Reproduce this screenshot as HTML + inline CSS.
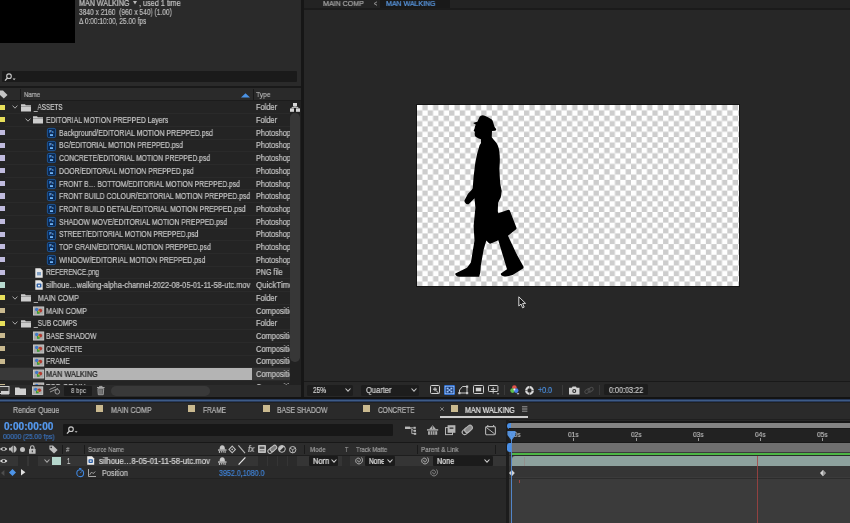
<!DOCTYPE html>
<html><head><meta charset="utf-8"><title>After Effects - MAN WALKING</title>
<style>
html,body{margin:0;padding:0;background:#232323;}
body{width:850px;height:523px;position:relative;overflow:hidden;font-family:"Liberation Sans",sans-serif;font-size:8.6px;color:#c2c2c2;line-height:12.7px;}
div,svg{position:absolute;}
.ic{overflow:visible}
#proj{left:0;top:0;width:301.5px;height:398px;background:#2a2a2a;overflow:hidden}
.lab{left:0;width:4.7px;height:5.2px}
.nm{white-space:nowrap;height:12.7px;color:#c4c4c4}
.nm.sel{color:#1a1a1a}
.ty{left:256px;width:35px;overflow:hidden;white-space:nowrap;height:12.7px;color:#c4c4c4}
.selrow{left:0;width:291px;height:11.6px;background:#393939}
.selrow:after{content:"";position:absolute;left:44.5px;top:0;width:207px;height:100%;background:#b4b4b4}
.t{white-space:pre;will-change:transform;-webkit-text-stroke:0.22px currentColor}
</style></head><body>
<!-- ===== PROJECT PANEL ===== -->
<div id="proj">
  <div style="left:0;top:0;width:75px;height:43px;background:#000"></div>
  <div class="t" style="left:78.80px;top:-3.10px;font-size:8.6px;line-height:12.0px;color:#c8c8c8;transform:scaleX(0.8300);transform-origin:0 0;">MAN WALKING</div>
  <svg class="ic" style="left:132.6px;top:1.2px" width="4" height="3.4" viewBox="0 0 4 3.4"><path d="M0 0H4L2 3.4z" fill="#b8b8b8"/></svg>
  <div class="t" style="left:139.20px;top:-3.10px;font-size:8.6px;line-height:12.0px;color:#c2c2c2;transform:scaleX(0.8449);transform-origin:0 0;">, used 1 time</div>
  <div class="t" style="left:78.80px;top:6.20px;font-size:8.6px;line-height:12.0px;color:#bdbdbd;transform:scaleX(0.7711);transform-origin:0 0;">3840 x 2160  (960 x 540) (1.00)</div>
  <div class="t" style="left:78.80px;top:14.80px;font-size:8.6px;line-height:12.0px;color:#bdbdbd;transform:scaleX(0.7618);transform-origin:0 0;">Δ 0:00:10:00, 25.00 fps</div>
  <div style="left:0;top:100.6px;width:301.5px;height:284px;background:#242424"></div>
  <!-- search -->
  <div style="left:1.5px;top:71px;width:295px;height:10.8px;background:#1a1a1a;border-radius:1px"></div>
  <svg class="ic" style="left:4px;top:72.5px" width="12" height="9" viewBox="0 0 12 9"><circle cx="5" cy="3.2" r="2.3" fill="none" stroke="#c9c9c9" stroke-width="1.1"/><path d="M3.4 5L1 7.6" stroke="#c9c9c9" stroke-width="1.3"/><path d="M8.6 5.6h3l-1.5 1.6z" fill="#c9c9c9"/></svg>
  <!-- header -->
  <div style="left:0;top:86.4px;width:301.5px;height:1.8px;background:#191919"></div><div style="left:0;top:100px;width:301.5px;height:1px;background:#1c1c1c"></div>
  <div style="left:252.5px;top:89px;width:1px;height:11px;background:#181818"></div>
  <div style="left:19.6px;top:89px;width:1px;height:11px;background:#1a1a1a"></div>
  <svg class="ic" style="left:0;top:90px" width="8" height="9" viewBox="0 0 8 9"><path d="M-1 0.5H3L7.5 5L3.8 8.6L-1 4z" fill="#c6c6c6"/></svg>
  <div class="t" style="left:24.00px;top:89.30px;font-size:8.0px;line-height:12.0px;color:#b2b2b2;transform:scaleX(0.7497);transform-origin:0 0;">Name</div>
  <div class="t" style="left:256.00px;top:89.30px;font-size:8.0px;line-height:12.0px;color:#b2b2b2;transform:scaleX(0.8360);transform-origin:0 0;">Type</div>
  <svg class="ic" style="left:241px;top:92.5px" width="9" height="5" viewBox="0 0 9 5"><path d="M0 4.6L4.5 0.3L9 4.6z" fill="#4b93e6"/></svg>
<div style="left:5px;top:113.20px;width:285px;height:0.8px;background:#2a2a2a"></div>
<div class="lab" style="top:104.50px;background:#e6de5a"></div>
<svg class="ic" style="left:12.2px;top:105.30px" width="6" height="4" viewBox="0 0 6 4"><path d="M0.6 0.6L3 3.2L5.4 0.6" fill="none" stroke="#a8a8a8" stroke-width="1"/></svg>
<svg class="ic" style="left:21px;top:103.50px" width="10" height="7.6" viewBox="0 0 10 7.6"><path d="M0 0.3h4l0.8 1H10V7.6H0z" fill="#cdcdcd"/><path d="M0 2.5H10" stroke="#8a8a8a" stroke-width="0.7"/></svg>
<div class="t" style="left:33.50px;top:101.25px;font-size:8.6px;line-height:12.0px;color:#c4c4c4;transform:scaleX(0.7361);transform-origin:0 0;">_ASSETS</div>
<div style="left:5px;top:125.91px;width:285px;height:0.8px;background:#2a2a2a"></div>
<div class="lab" style="top:117.21px;background:#e6de5a"></div>
<svg class="ic" style="left:24.6px;top:118.01px" width="6" height="4" viewBox="0 0 6 4"><path d="M0.6 0.6L3 3.2L5.4 0.6" fill="none" stroke="#a8a8a8" stroke-width="1"/></svg>
<svg class="ic" style="left:33.4px;top:116.21px" width="10" height="7.6" viewBox="0 0 10 7.6"><path d="M0 0.3h4l0.8 1H10V7.6H0z" fill="#cdcdcd"/><path d="M0 2.5H10" stroke="#8a8a8a" stroke-width="0.7"/></svg>
<div class="t" style="left:45.50px;top:113.96px;font-size:8.6px;line-height:12.0px;color:#c4c4c4;transform:scaleX(0.7972);transform-origin:0 0;">EDITORIAL MOTION PREPPED Layers</div>
<div style="left:5px;top:138.62px;width:285px;height:0.8px;background:#2a2a2a"></div>
<div class="lab" style="top:129.92px;background:#c0bbde"></div>
<svg class="ic" style="left:46.7px;top:127.92px" width="9" height="10" viewBox="0 0 9 10"><rect x="0.4" y="0.4" width="8.2" height="9.2" rx="1.4" fill="#0a2a55" stroke="#1f5594" stroke-width="1"/><text x="4.5" y="5" font-size="3.6" font-weight="bold" fill="#6fb2f4" text-anchor="middle" font-family="Liberation Sans, sans-serif">Ps</text><rect x="3" y="6.2" width="3" height="1.8" fill="#6fb2f4"/></svg>
<div class="t" style="left:58.50px;top:126.67px;font-size:8.6px;line-height:12.0px;color:#c4c4c4;transform:scaleX(0.8121);transform-origin:0 0;">Background/EDITORIAL MOTION PREPPED.psd</div>
<div style="left:5px;top:151.33px;width:285px;height:0.8px;background:#2a2a2a"></div>
<div class="lab" style="top:142.63px;background:#c0bbde"></div>
<svg class="ic" style="left:46.7px;top:140.63px" width="9" height="10" viewBox="0 0 9 10"><rect x="0.4" y="0.4" width="8.2" height="9.2" rx="1.4" fill="#0a2a55" stroke="#1f5594" stroke-width="1"/><text x="4.5" y="5" font-size="3.6" font-weight="bold" fill="#6fb2f4" text-anchor="middle" font-family="Liberation Sans, sans-serif">Ps</text><rect x="3" y="6.2" width="3" height="1.8" fill="#6fb2f4"/></svg>
<div class="t" style="left:58.50px;top:139.38px;font-size:8.6px;line-height:12.0px;color:#c4c4c4;transform:scaleX(0.7928);transform-origin:0 0;">BG/EDITORIAL MOTION PREPPED.psd</div>
<div style="left:5px;top:164.04px;width:285px;height:0.8px;background:#2a2a2a"></div>
<div class="lab" style="top:155.34px;background:#c0bbde"></div>
<svg class="ic" style="left:46.7px;top:153.34px" width="9" height="10" viewBox="0 0 9 10"><rect x="0.4" y="0.4" width="8.2" height="9.2" rx="1.4" fill="#0a2a55" stroke="#1f5594" stroke-width="1"/><text x="4.5" y="5" font-size="3.6" font-weight="bold" fill="#6fb2f4" text-anchor="middle" font-family="Liberation Sans, sans-serif">Ps</text><rect x="3" y="6.2" width="3" height="1.8" fill="#6fb2f4"/></svg>
<div class="t" style="left:58.50px;top:152.09px;font-size:8.6px;line-height:12.0px;color:#c4c4c4;transform:scaleX(0.7871);transform-origin:0 0;">CONCRETE/EDITORIAL MOTION PREPPED.psd</div>
<div style="left:5px;top:176.75px;width:285px;height:0.8px;background:#2a2a2a"></div>
<div class="lab" style="top:168.05px;background:#c0bbde"></div>
<svg class="ic" style="left:46.7px;top:166.05px" width="9" height="10" viewBox="0 0 9 10"><rect x="0.4" y="0.4" width="8.2" height="9.2" rx="1.4" fill="#0a2a55" stroke="#1f5594" stroke-width="1"/><text x="4.5" y="5" font-size="3.6" font-weight="bold" fill="#6fb2f4" text-anchor="middle" font-family="Liberation Sans, sans-serif">Ps</text><rect x="3" y="6.2" width="3" height="1.8" fill="#6fb2f4"/></svg>
<div class="t" style="left:58.50px;top:164.80px;font-size:8.6px;line-height:12.0px;color:#c4c4c4;transform:scaleX(0.7946);transform-origin:0 0;">DOOR/EDITORIAL MOTION PREPPED.psd</div>
<div style="left:5px;top:189.46px;width:285px;height:0.8px;background:#2a2a2a"></div>
<div class="lab" style="top:180.76px;background:#c0bbde"></div>
<svg class="ic" style="left:46.7px;top:178.76px" width="9" height="10" viewBox="0 0 9 10"><rect x="0.4" y="0.4" width="8.2" height="9.2" rx="1.4" fill="#0a2a55" stroke="#1f5594" stroke-width="1"/><text x="4.5" y="5" font-size="3.6" font-weight="bold" fill="#6fb2f4" text-anchor="middle" font-family="Liberation Sans, sans-serif">Ps</text><rect x="3" y="6.2" width="3" height="1.8" fill="#6fb2f4"/></svg>
<div class="t" style="left:58.50px;top:177.51px;font-size:8.6px;line-height:12.0px;color:#c4c4c4;transform:scaleX(0.7906);transform-origin:0 0;">FRONT B… BOTTOM/EDITORIAL MOTION PREPPED.psd</div>
<div style="left:5px;top:202.17px;width:285px;height:0.8px;background:#2a2a2a"></div>
<div class="lab" style="top:193.47px;background:#c0bbde"></div>
<svg class="ic" style="left:46.7px;top:191.47px" width="9" height="10" viewBox="0 0 9 10"><rect x="0.4" y="0.4" width="8.2" height="9.2" rx="1.4" fill="#0a2a55" stroke="#1f5594" stroke-width="1"/><text x="4.5" y="5" font-size="3.6" font-weight="bold" fill="#6fb2f4" text-anchor="middle" font-family="Liberation Sans, sans-serif">Ps</text><rect x="3" y="6.2" width="3" height="1.8" fill="#6fb2f4"/></svg>
<div class="t" style="left:58.50px;top:190.22px;font-size:8.6px;line-height:12.0px;color:#c4c4c4;transform:scaleX(0.7964);transform-origin:0 0;">FRONT BUILD COLOUR/EDITORIAL MOTION PREPPED.psd</div>
<div style="left:5px;top:214.88px;width:285px;height:0.8px;background:#2a2a2a"></div>
<div class="lab" style="top:206.18px;background:#c0bbde"></div>
<svg class="ic" style="left:46.7px;top:204.18px" width="9" height="10" viewBox="0 0 9 10"><rect x="0.4" y="0.4" width="8.2" height="9.2" rx="1.4" fill="#0a2a55" stroke="#1f5594" stroke-width="1"/><text x="4.5" y="5" font-size="3.6" font-weight="bold" fill="#6fb2f4" text-anchor="middle" font-family="Liberation Sans, sans-serif">Ps</text><rect x="3" y="6.2" width="3" height="1.8" fill="#6fb2f4"/></svg>
<div class="t" style="left:58.50px;top:202.93px;font-size:8.6px;line-height:12.0px;color:#c4c4c4;transform:scaleX(0.8012);transform-origin:0 0;">FRONT BUILD DETAIL/EDITORIAL MOTION PREPPED.psd</div>
<div style="left:5px;top:227.59px;width:285px;height:0.8px;background:#2a2a2a"></div>
<div class="lab" style="top:218.89px;background:#c0bbde"></div>
<svg class="ic" style="left:46.7px;top:216.89px" width="9" height="10" viewBox="0 0 9 10"><rect x="0.4" y="0.4" width="8.2" height="9.2" rx="1.4" fill="#0a2a55" stroke="#1f5594" stroke-width="1"/><text x="4.5" y="5" font-size="3.6" font-weight="bold" fill="#6fb2f4" text-anchor="middle" font-family="Liberation Sans, sans-serif">Ps</text><rect x="3" y="6.2" width="3" height="1.8" fill="#6fb2f4"/></svg>
<div class="t" style="left:58.50px;top:215.64px;font-size:8.6px;line-height:12.0px;color:#c4c4c4;transform:scaleX(0.8004);transform-origin:0 0;">SHADOW MOVE/EDITORIAL MOTION PREPPED.psd</div>
<div style="left:5px;top:240.30px;width:285px;height:0.8px;background:#2a2a2a"></div>
<div class="lab" style="top:231.60px;background:#c0bbde"></div>
<svg class="ic" style="left:46.7px;top:229.60px" width="9" height="10" viewBox="0 0 9 10"><rect x="0.4" y="0.4" width="8.2" height="9.2" rx="1.4" fill="#0a2a55" stroke="#1f5594" stroke-width="1"/><text x="4.5" y="5" font-size="3.6" font-weight="bold" fill="#6fb2f4" text-anchor="middle" font-family="Liberation Sans, sans-serif">Ps</text><rect x="3" y="6.2" width="3" height="1.8" fill="#6fb2f4"/></svg>
<div class="t" style="left:58.50px;top:228.35px;font-size:8.6px;line-height:12.0px;color:#c4c4c4;transform:scaleX(0.7847);transform-origin:0 0;">STREET/EDITORIAL MOTION PREPPED.psd</div>
<div style="left:5px;top:253.01px;width:285px;height:0.8px;background:#2a2a2a"></div>
<div class="lab" style="top:244.31px;background:#c0bbde"></div>
<svg class="ic" style="left:46.7px;top:242.31px" width="9" height="10" viewBox="0 0 9 10"><rect x="0.4" y="0.4" width="8.2" height="9.2" rx="1.4" fill="#0a2a55" stroke="#1f5594" stroke-width="1"/><text x="4.5" y="5" font-size="3.6" font-weight="bold" fill="#6fb2f4" text-anchor="middle" font-family="Liberation Sans, sans-serif">Ps</text><rect x="3" y="6.2" width="3" height="1.8" fill="#6fb2f4"/></svg>
<div class="t" style="left:58.50px;top:241.06px;font-size:8.6px;line-height:12.0px;color:#c4c4c4;transform:scaleX(0.7959);transform-origin:0 0;">TOP GRAIN/EDITORIAL MOTION PREPPED.psd</div>
<div style="left:5px;top:265.72px;width:285px;height:0.8px;background:#2a2a2a"></div>
<div class="lab" style="top:257.02px;background:#c0bbde"></div>
<svg class="ic" style="left:46.7px;top:255.02px" width="9" height="10" viewBox="0 0 9 10"><rect x="0.4" y="0.4" width="8.2" height="9.2" rx="1.4" fill="#0a2a55" stroke="#1f5594" stroke-width="1"/><text x="4.5" y="5" font-size="3.6" font-weight="bold" fill="#6fb2f4" text-anchor="middle" font-family="Liberation Sans, sans-serif">Ps</text><rect x="3" y="6.2" width="3" height="1.8" fill="#6fb2f4"/></svg>
<div class="t" style="left:58.50px;top:253.77px;font-size:8.6px;line-height:12.0px;color:#c4c4c4;transform:scaleX(0.8068);transform-origin:0 0;">WINDOW/EDITORIAL MOTION PREPPED.psd</div>
<div style="left:5px;top:278.43px;width:285px;height:0.8px;background:#2a2a2a"></div>
<div class="lab" style="top:269.73px;background:#c0bbde"></div>
<svg class="ic" style="left:35px;top:267.73px" width="8" height="10" viewBox="0 0 8 10"><path d="M0.3 0.3H5.5L7.7 2.6V9.7H0.3z" fill="#e6e6e6"/><rect x="2" y="4" width="4" height="3.4" fill="#7f9fc4"/></svg>
<div class="t" style="left:45.50px;top:266.48px;font-size:8.6px;line-height:12.0px;color:#c4c4c4;transform:scaleX(0.7595);transform-origin:0 0;">REFERENCE.png</div>
<div style="left:5px;top:291.14px;width:285px;height:0.8px;background:#2a2a2a"></div>
<div class="lab" style="top:282.44px;background:#b8dad0"></div>
<svg class="ic" style="left:35px;top:280.44px" width="8" height="10" viewBox="0 0 8 10"><path d="M0.3 0.3H5.5L7.7 2.6V9.7H0.3z" fill="#e6e6e6"/><rect x="1.6" y="3.6" width="4.8" height="4" rx="0.8" fill="#2a5fa8"/><rect x="3" y="4.8" width="2" height="1.6" fill="#e6e6e6"/></svg>
<div class="t" style="left:45.50px;top:279.19px;font-size:8.6px;line-height:12.0px;color:#c4c4c4;transform:scaleX(0.8587);transform-origin:0 0;">silhoue…walking-alpha-channel-2022-08-05-01-11-58-utc.mov</div>
<div style="left:5px;top:303.85px;width:285px;height:0.8px;background:#2a2a2a"></div>
<div class="lab" style="top:295.15px;background:#e6de5a"></div>
<svg class="ic" style="left:12.2px;top:295.95px" width="6" height="4" viewBox="0 0 6 4"><path d="M0.6 0.6L3 3.2L5.4 0.6" fill="none" stroke="#a8a8a8" stroke-width="1"/></svg>
<svg class="ic" style="left:21px;top:294.15px" width="10" height="7.6" viewBox="0 0 10 7.6"><path d="M0 0.3h4l0.8 1H10V7.6H0z" fill="#cdcdcd"/><path d="M0 2.5H10" stroke="#8a8a8a" stroke-width="0.7"/></svg>
<div class="t" style="left:33.50px;top:291.90px;font-size:8.6px;line-height:12.0px;color:#c4c4c4;transform:scaleX(0.8243);transform-origin:0 0;">_MAIN COMP</div>
<div style="left:5px;top:316.56px;width:285px;height:0.8px;background:#2a2a2a"></div>
<div class="lab" style="top:307.86px;background:#c9b98f"></div>
<svg class="ic" style="left:32.8px;top:305.76px" width="11.2" height="10" viewBox="0 0 11.2 10"><rect x="0" y="0" width="11.2" height="10" fill="#141414"/><rect x="0.4" y="0.9" width="10.4" height="8.2" fill="#a9a9a9" stroke="#d6d6d6" stroke-width="0.8"/><circle cx="3.7" cy="3.5" r="1.7" fill="#3f78c8"/><circle cx="7.3" cy="4.6" r="1.9" fill="#b23a30"/><rect x="4" y="5" width="2.6" height="2.8" fill="#3a9a3a"/><rect x="5.2" y="4.6" width="1.4" height="1.6" fill="#d0b030"/></svg>
<div class="t" style="left:45.50px;top:304.61px;font-size:8.6px;line-height:12.0px;color:#c4c4c4;transform:scaleX(0.8231);transform-origin:0 0;">MAIN COMP</div>
<div style="left:5px;top:329.27px;width:285px;height:0.8px;background:#2a2a2a"></div>
<div class="lab" style="top:320.57px;background:#e6de5a"></div>
<svg class="ic" style="left:12.2px;top:321.37px" width="6" height="4" viewBox="0 0 6 4"><path d="M0.6 0.6L3 3.2L5.4 0.6" fill="none" stroke="#a8a8a8" stroke-width="1"/></svg>
<svg class="ic" style="left:21px;top:319.57px" width="10" height="7.6" viewBox="0 0 10 7.6"><path d="M0 0.3h4l0.8 1H10V7.6H0z" fill="#cdcdcd"/><path d="M0 2.5H10" stroke="#8a8a8a" stroke-width="0.7"/></svg>
<div class="t" style="left:33.50px;top:317.32px;font-size:8.6px;line-height:12.0px;color:#c4c4c4;transform:scaleX(0.7643);transform-origin:0 0;">_SUB COMPS</div>
<div style="left:5px;top:341.98px;width:285px;height:0.8px;background:#2a2a2a"></div>
<div class="lab" style="top:333.28px;background:#c9b98f"></div>
<svg class="ic" style="left:32.8px;top:331.18px" width="11.2" height="10" viewBox="0 0 11.2 10"><rect x="0" y="0" width="11.2" height="10" fill="#141414"/><rect x="0.4" y="0.9" width="10.4" height="8.2" fill="#a9a9a9" stroke="#d6d6d6" stroke-width="0.8"/><circle cx="3.7" cy="3.5" r="1.7" fill="#3f78c8"/><circle cx="7.3" cy="4.6" r="1.9" fill="#b23a30"/><rect x="4" y="5" width="2.6" height="2.8" fill="#3a9a3a"/><rect x="5.2" y="4.6" width="1.4" height="1.6" fill="#d0b030"/></svg>
<div class="t" style="left:45.50px;top:330.03px;font-size:8.6px;line-height:12.0px;color:#c4c4c4;transform:scaleX(0.7871);transform-origin:0 0;">BASE SHADOW</div>
<div style="left:5px;top:354.69px;width:285px;height:0.8px;background:#2a2a2a"></div>
<div class="lab" style="top:345.99px;background:#c9b98f"></div>
<svg class="ic" style="left:32.8px;top:343.89px" width="11.2" height="10" viewBox="0 0 11.2 10"><rect x="0" y="0" width="11.2" height="10" fill="#141414"/><rect x="0.4" y="0.9" width="10.4" height="8.2" fill="#a9a9a9" stroke="#d6d6d6" stroke-width="0.8"/><circle cx="3.7" cy="3.5" r="1.7" fill="#3f78c8"/><circle cx="7.3" cy="4.6" r="1.9" fill="#b23a30"/><rect x="4" y="5" width="2.6" height="2.8" fill="#3a9a3a"/><rect x="5.2" y="4.6" width="1.4" height="1.6" fill="#d0b030"/></svg>
<div class="t" style="left:45.50px;top:342.74px;font-size:8.6px;line-height:12.0px;color:#c4c4c4;transform:scaleX(0.7501);transform-origin:0 0;">CONCRETE</div>
<div style="left:5px;top:367.40px;width:285px;height:0.8px;background:#2a2a2a"></div>
<div class="lab" style="top:358.70px;background:#c9b98f"></div>
<svg class="ic" style="left:32.8px;top:356.60px" width="11.2" height="10" viewBox="0 0 11.2 10"><rect x="0" y="0" width="11.2" height="10" fill="#141414"/><rect x="0.4" y="0.9" width="10.4" height="8.2" fill="#a9a9a9" stroke="#d6d6d6" stroke-width="0.8"/><circle cx="3.7" cy="3.5" r="1.7" fill="#3f78c8"/><circle cx="7.3" cy="4.6" r="1.9" fill="#b23a30"/><rect x="4" y="5" width="2.6" height="2.8" fill="#3a9a3a"/><rect x="5.2" y="4.6" width="1.4" height="1.6" fill="#d0b030"/></svg>
<div class="t" style="left:45.50px;top:355.45px;font-size:8.6px;line-height:12.0px;color:#c4c4c4;transform:scaleX(0.7907);transform-origin:0 0;">FRAME</div>
<div style="left:5px;top:380.11px;width:285px;height:0.8px;background:#2a2a2a"></div>
<div class="lab" style="top:371.41px;background:#c9b98f"></div>
<div class="selrow" style="top:368.11px"></div>
<svg class="ic" style="left:32.8px;top:369.31px" width="11.2" height="10" viewBox="0 0 11.2 10"><rect x="0" y="0" width="11.2" height="10" fill="#141414"/><rect x="0.4" y="0.9" width="10.4" height="8.2" fill="#a9a9a9" stroke="#d6d6d6" stroke-width="0.8"/><circle cx="3.7" cy="3.5" r="1.7" fill="#3f78c8"/><circle cx="7.3" cy="4.6" r="1.9" fill="#b23a30"/><rect x="4" y="5" width="2.6" height="2.8" fill="#3a9a3a"/><rect x="5.2" y="4.6" width="1.4" height="1.6" fill="#d0b030"/></svg>
<div class="t" style="left:45.50px;top:368.16px;font-size:8.6px;line-height:12.0px;color:#1a1a1a;transform:scaleX(0.8530);transform-origin:0 0;">MAN WALKING</div>
<div style="left:5px;top:392.82px;width:285px;height:0.8px;background:#2a2a2a"></div>
<div class="lab" style="top:384.12px;background:#c9b98f"></div>
<svg class="ic" style="left:32.8px;top:382.02px" width="11.2" height="10" viewBox="0 0 11.2 10"><rect x="0" y="0" width="11.2" height="10" fill="#141414"/><rect x="0.4" y="0.9" width="10.4" height="8.2" fill="#a9a9a9" stroke="#d6d6d6" stroke-width="0.8"/><circle cx="3.7" cy="3.5" r="1.7" fill="#3f78c8"/><circle cx="7.3" cy="4.6" r="1.9" fill="#b23a30"/><rect x="4" y="5" width="2.6" height="2.8" fill="#3a9a3a"/><rect x="5.2" y="4.6" width="1.4" height="1.6" fill="#d0b030"/></svg>
<div class="t" style="left:45.50px;top:380.87px;font-size:8.6px;line-height:12.0px;color:#c4c4c4;transform:scaleX(0.8405);transform-origin:0 0;">TOP GRAIN</div>
<div style="left:253px;top:0;width:36.9px;height:385px;overflow:hidden"><div class="t" style="left:3.30px;top:101.25px;font-size:8.6px;line-height:12.0px;color:#c4c4c4;transform:scaleX(0.8614);transform-origin:0 0;">Folder</div><div class="t" style="left:3.30px;top:113.96px;font-size:8.6px;line-height:12.0px;color:#c4c4c4;transform:scaleX(0.8614);transform-origin:0 0;">Folder</div><div class="t" style="left:3.30px;top:126.67px;font-size:8.6px;line-height:12.0px;color:#c4c4c4;transform:scaleX(0.8487);transform-origin:0 0;">Photoshop</div><div class="t" style="left:3.30px;top:139.38px;font-size:8.6px;line-height:12.0px;color:#c4c4c4;transform:scaleX(0.8487);transform-origin:0 0;">Photoshop</div><div class="t" style="left:3.30px;top:152.09px;font-size:8.6px;line-height:12.0px;color:#c4c4c4;transform:scaleX(0.8487);transform-origin:0 0;">Photoshop</div><div class="t" style="left:3.30px;top:164.80px;font-size:8.6px;line-height:12.0px;color:#c4c4c4;transform:scaleX(0.8487);transform-origin:0 0;">Photoshop</div><div class="t" style="left:3.30px;top:177.51px;font-size:8.6px;line-height:12.0px;color:#c4c4c4;transform:scaleX(0.8487);transform-origin:0 0;">Photoshop</div><div class="t" style="left:3.30px;top:190.22px;font-size:8.6px;line-height:12.0px;color:#c4c4c4;transform:scaleX(0.8487);transform-origin:0 0;">Photoshop</div><div class="t" style="left:3.30px;top:202.93px;font-size:8.6px;line-height:12.0px;color:#c4c4c4;transform:scaleX(0.8487);transform-origin:0 0;">Photoshop</div><div class="t" style="left:3.30px;top:215.64px;font-size:8.6px;line-height:12.0px;color:#c4c4c4;transform:scaleX(0.8487);transform-origin:0 0;">Photoshop</div><div class="t" style="left:3.30px;top:228.35px;font-size:8.6px;line-height:12.0px;color:#c4c4c4;transform:scaleX(0.8487);transform-origin:0 0;">Photoshop</div><div class="t" style="left:3.30px;top:241.06px;font-size:8.6px;line-height:12.0px;color:#c4c4c4;transform:scaleX(0.8487);transform-origin:0 0;">Photoshop</div><div class="t" style="left:3.30px;top:253.77px;font-size:8.6px;line-height:12.0px;color:#c4c4c4;transform:scaleX(0.8487);transform-origin:0 0;">Photoshop</div><div class="t" style="left:3.30px;top:266.48px;font-size:8.6px;line-height:12.0px;color:#c4c4c4;transform:scaleX(0.8276);transform-origin:0 0;">PNG file</div><div class="t" style="left:3.30px;top:279.19px;font-size:8.6px;line-height:12.0px;color:#c4c4c4;transform:scaleX(0.9246);transform-origin:0 0;">QuickTime</div><div class="t" style="left:3.30px;top:291.90px;font-size:8.6px;line-height:12.0px;color:#c4c4c4;transform:scaleX(0.8614);transform-origin:0 0;">Folder</div><div class="t" style="left:3.30px;top:304.61px;font-size:8.6px;line-height:12.0px;color:#c4c4c4;transform:scaleX(0.8640);transform-origin:0 0;">Composition</div><div class="t" style="left:3.30px;top:317.32px;font-size:8.6px;line-height:12.0px;color:#c4c4c4;transform:scaleX(0.8614);transform-origin:0 0;">Folder</div><div class="t" style="left:3.30px;top:330.03px;font-size:8.6px;line-height:12.0px;color:#c4c4c4;transform:scaleX(0.8640);transform-origin:0 0;">Composition</div><div class="t" style="left:3.30px;top:342.74px;font-size:8.6px;line-height:12.0px;color:#c4c4c4;transform:scaleX(0.8640);transform-origin:0 0;">Composition</div><div class="t" style="left:3.30px;top:355.45px;font-size:8.6px;line-height:12.0px;color:#c4c4c4;transform:scaleX(0.8640);transform-origin:0 0;">Composition</div><div class="t" style="left:3.30px;top:368.16px;font-size:8.6px;line-height:12.0px;color:#c4c4c4;transform:scaleX(0.8640);transform-origin:0 0;">Composition</div><div class="t" style="left:3.30px;top:380.87px;font-size:8.6px;line-height:12.0px;color:#c4c4c4;transform:scaleX(0.8640);transform-origin:0 0;">Composition</div></div>
  <!-- scrollbar -->
  <div style="left:289.6px;top:101px;width:11.9px;height:284px;background:#212121"></div><div style="left:290.4px;top:112.6px;width:9.4px;height:249px;background:#373737;border-radius:4.7px"></div>
  <!-- flowchart icon -->
  <svg class="ic" style="left:290px;top:102.5px" width="10" height="9" viewBox="0 0 10 9"><rect x="3" y="0" width="4" height="3.4" fill="#d6d6d6"/><rect x="0" y="5.4" width="4" height="3.4" fill="#d6d6d6"/><rect x="6" y="5.4" width="4" height="3.4" fill="#d6d6d6"/><path d="M5 3v1.4M2 5.4V4.4H8V5.4" stroke="#d6d6d6" stroke-width="0.9" fill="none"/></svg>
  <!-- bottom toolbar -->
  <div style="left:0;top:385.4px;width:301.5px;height:12.6px;background:#2b2b2b"></div>
  <svg class="ic" style="left:0;top:386px" width="10" height="9" viewBox="0 0 10 9"><rect x="-1" y="0.5" width="10" height="7" fill="#3a3a3a" stroke="#cfcfcf" stroke-width="1"/><rect x="1" y="5" width="8" height="3.5" fill="#cfcfcf"/></svg>
  <svg class="ic" style="left:15px;top:386.5px" width="11" height="8" viewBox="0 0 11 8"><path d="M0 0.4h4.2l0.8 1H11V8H0z" fill="#d0d0d0"/></svg>
  <svg class="ic" style="left:31.6px;top:386.2px" width="11.2" height="9.4" viewBox="0 0 11.2 10" preserveAspectRatio="none"><rect x="0.4" y="0.9" width="10.4" height="8.2" fill="#a9a9a9" stroke="#d6d6d6" stroke-width="0.8"/><circle cx="3.7" cy="3.5" r="1.7" fill="#3f78c8"/><circle cx="7.3" cy="4.6" r="1.9" fill="#b23a30"/><rect x="4" y="5" width="2.6" height="2.8" fill="#3a9a3a"/><rect x="5.2" y="4.6" width="1.4" height="1.6" fill="#d0b030"/></svg>
  <svg class="ic" style="left:49px;top:386px" width="12" height="9" viewBox="0 0 12 9"><path d="M0.5 3.5L7 0.8M1 6L9 2.4" stroke="#9a9a9a" stroke-width="1" fill="none"/><circle cx="8.3" cy="5.8" r="2.3" fill="none" stroke="#9a9a9a" stroke-width="1"/></svg>
  <div style="left:64px;top:386px;width:28px;height:10px;background:#1c1c1c;border-radius:1px"></div>
  <div class="t" style="left:70.50px;top:385.40px;font-size:7.6px;line-height:12.0px;color:#b5b5b5;transform:scaleX(0.8068);transform-origin:0 0;">8 bpc</div>
  <svg class="ic" style="left:97.2px;top:386.4px" width="7.6" height="9" viewBox="0 0 7.6 9"><path d="M0 1.5H7.6M2.5 1.3V0.4H5.1V1.3" stroke="#b4b4b4" stroke-width="0.9" fill="none"/><path d="M0.9 2.6H6.7L6.3 8.7H1.3z" fill="#4a4a4a" stroke="#b0b0b0" stroke-width="0.8"/><path d="M2.7 3.4V8M3.8 3.4V8M4.9 3.4V8" stroke="#b0b0b0" stroke-width="0.5"/></svg>
  <div style="left:111px;top:386px;width:99px;height:9.6px;background:#393939;border-radius:5px"></div>
</div>
<!-- divider between project and viewer -->
<div style="left:301.4px;top:0;width:2.8px;height:398px;background:#161616"></div>

<!-- ===== VIEWER PANEL ===== -->
<div id="viewer" style="left:304px;top:0;width:546px;height:398px;background:#272727;overflow:hidden">
  <div style="left:0;top:0;width:546px;height:8.5px;background:#232323"></div>
  <div style="left:76px;top:0;width:69.6px;height:7.8px;background:#191919"></div>
  <div class="t" style="left:19.00px;top:-2.40px;font-size:7.4px;line-height:12.0px;color:#a6a6a6;transform:scaleX(0.9589);transform-origin:0 0;">MAIN COMP</div>
  <div class="t" style="left:70.00px;top:-2.40px;font-size:7.4px;line-height:12.0px;color:#a6a6a6;transform:scaleX(0.6942);transform-origin:0 0;">&lt;</div>
  <div class="t" style="left:82.00px;top:-2.40px;font-size:7.4px;line-height:12.0px;color:#5b9be6;transform:scaleX(0.9455);transform-origin:0 0;">MAN WALKING</div>
  <div style="left:0;top:8px;width:546px;height:1.5px;background:#1b1b1b"></div>
  <!-- comp image -->
  <div style="left:112px;top:104.2px;width:323.6px;height:183.2px;background:#151515"></div>
  <svg style="left:113px;top:105.2px;overflow:hidden" width="321.6" height="181.1" viewBox="0 0 321.6 181.1">
    <defs><filter id="bl" x="-5%" y="-5%" width="110%" height="110%"><feGaussianBlur stdDeviation="0.7"/></filter><pattern id="chk" width="10.7" height="10.7" patternUnits="userSpaceOnUse"><rect width="10.7" height="10.7" fill="#ffffff"/><rect x="5.35" y="0" width="5.35" height="5.35" fill="#cdcdcd"/><rect x="0" y="5.35" width="5.35" height="5.35" fill="#cdcdcd"/></pattern></defs>
    <rect x="-10.7" y="-10.7" width="353.1" height="214" fill="url(#chk)" filter="url(#bl)"/>
    <g transform="translate(-417,-105.2)"><path fill="#000" d="M482.5,115.5 Q485,115.6 491.4,119.4 Q492.4,120 492.8,121.5 L494.6,127.2 L496.3,129.5 L495.5,130.9 L492,131.1 L491.8,137.5 C494,141 496.8,142.6 497.9,146 C499.5,150 500,156 499.8,162 L499.4,170 L500.2,184 L501.7,191 L500.8,197.5 L498.1,203 L497.8,211.5 L498.3,213.4 L508.4,209.9 Q509.4,209.8 509.8,210.8 L516.5,228 Q516.8,229.2 515.8,229.8 L508,236 L516.2,253.5 L522.6,265.3 Q524.2,267.6 523,268.8 L512.6,275.3 Q507,277.2 503.5,276.4 Q500.2,275.6 500.9,273.8 L507,269.5 L498.3,240.5 L491,243.8 Q489.6,244.2 488.8,243.2 L486.3,240.8 L483.6,250 L480.8,266 L480.3,272.6 L479.2,277 L459.5,276.9 Q455,276.4 455.3,273.8 L467,268 L470.9,262.6 L472.7,251.7 L474.5,240.8 L473.6,226.3 L475.4,208 L474.5,198.5 L468.6,204.4 Q466.4,205 465.2,203 Q464,201.4 464.8,200 L468,194 L471.8,190 L472.7,188.5 L473.6,176.8 L475.3,163 L477,154.5 L479.6,145.5 L481,143.3 L481,139.5 L478.7,138.7 L475.6,137 Q474.6,136.2 474.7,133.8 L474.9,132.1 L473.6,130.7 L474.4,129.3 L475.1,126.1 L475.8,124.9 L473.1,123.2 L477.5,121.6 L479.6,117 Q480.6,115.6 482.5,115.5 Z"/></g>

  </svg>
  <!-- cursor -->
  <svg class="ic" style="left:213.5px;top:295.5px" width="9" height="13" viewBox="0 0 9 13"><path d="M0.8 0.8V10L3 8L4.6 11.8L6.2 11.1L4.6 7.4H7.6z" fill="#1a1a1a" stroke="#e6e6e6" stroke-width="0.9"/></svg>
  <!-- footer -->
  <div style="left:0;top:382px;width:546px;height:16px;background:#282828"></div>
  <div style="left:0;top:381.2px;width:546px;height:1.3px;background:#191919"></div>
  
  <div style="left:3px;top:384.5px;width:46px;height:11px;background:#1d1d1d;border-radius:1.5px"></div>
  <div class="t" style="left:8.80px;top:385.10px;font-size:8.2px;line-height:12.0px;color:#d0d0d0;transform:scaleX(0.8043);transform-origin:0 0;">25%</div>
  <svg class="ic" style="left:41px;top:388.2px" width="6" height="4" viewBox="0 0 6 4"><path d="M0.5 0.5L3 3.2L5.5 0.5" fill="none" stroke="#c4c4c4" stroke-width="1.1"/></svg>
  <div style="left:56.5px;top:384.5px;width:58px;height:11px;background:#1d1d1d;border-radius:1.5px"></div>
  <div class="t" style="left:61.50px;top:385.10px;font-size:8.2px;line-height:12.0px;color:#d0d0d0;transform:scaleX(0.9173);transform-origin:0 0;">Quarter</div>
  <svg class="ic" style="left:107px;top:388.2px" width="6" height="4" viewBox="0 0 6 4"><path d="M0.5 0.5L3 3.2L5.5 0.5" fill="none" stroke="#c4c4c4" stroke-width="1.1"/></svg>
  <!-- icon 1: region of interest -->
  <svg class="ic" style="left:125.5px;top:385.3px" width="10" height="9" viewBox="0 0 10 9"><rect x="0.5" y="0.5" width="9" height="8" rx="1" fill="#2a2a2a" stroke="#d2d2d2" stroke-width="1"/><path d="M3 4.2H7M5 2.3V6.2" stroke="#d2d2d2" stroke-width="1"/><path d="M6 5.4L8.6 8.2" stroke="#d2d2d2" stroke-width="1"/></svg>
  <!-- icon 2: transparency grid (active) -->
  <svg class="ic" style="left:140px;top:384.6px" width="11" height="10" viewBox="0 0 11 10"><rect x="0" y="0" width="11" height="10" rx="1.2" fill="#2f6fd0"/><rect x="1.2" y="1.3" width="8.6" height="7.4" fill="#15366e" stroke="#9cc4ff" stroke-width="0.7"/><rect x="2.6" y="2.6" width="2" height="1.8" fill="#9cc4ff"/><rect x="6.4" y="2.6" width="2" height="1.8" fill="#9cc4ff"/><rect x="4.5" y="4.2" width="2" height="1.7" fill="#9cc4ff"/><rect x="2.6" y="5.7" width="2" height="1.8" fill="#9cc4ff"/><rect x="6.4" y="5.7" width="2" height="1.8" fill="#9cc4ff"/></svg>
  <!-- icon 3: mask / shape path -->
  <svg class="ic" style="left:154px;top:385px" width="11" height="10" viewBox="0 0 11 10"><path d="M1.5 8V5L4.5 1.5H9V8z" fill="none" stroke="#c8c8c8" stroke-width="1"/><rect x="0.3" y="7" width="2.2" height="2.2" fill="#c8c8c8"/><rect x="8" y="7" width="2.2" height="2.2" fill="#c8c8c8"/><rect x="8" y="0.5" width="2.2" height="2.2" fill="#c8c8c8"/></svg>
  <!-- icon 4: safe zones -->
  <svg class="ic" style="left:169px;top:385.3px" width="11" height="9" viewBox="0 0 11 9"><rect x="0.5" y="0.5" width="10" height="8" rx="1" fill="none" stroke="#d0d0d0" stroke-width="1"/><rect x="2.8" y="2.7" width="5.4" height="3.6" fill="#d0d0d0"/></svg>
  <!-- icon 5: guides -->
  <svg class="ic" style="left:184px;top:385px" width="12" height="10" viewBox="0 0 12 10"><rect x="0.5" y="0.5" width="9.4" height="6" rx="0.8" fill="none" stroke="#cfcfcf" stroke-width="1"/><path d="M5.2 2V8.6M3 4.5H7.4" stroke="#cfcfcf" stroke-width="0.9"/><path d="M8.6 8.2h2.8l-1.4 1.6z" fill="#cfcfcf"/></svg>
  <div style="left:199.5px;top:385px;width:1px;height:10px;background:#3a3a3a"></div>
  <!-- colour channels -->
  <svg class="ic" style="left:206px;top:385px" width="10" height="10" viewBox="0 0 10 10"><circle cx="4.4" cy="2.6" r="2.3" fill="#e0524a"/><circle cx="2.6" cy="5.6" r="2.3" fill="#5fc04c"/><circle cx="6.2" cy="5.6" r="2.3" fill="#4a7fe6"/><circle cx="4.4" cy="4.5" r="1" fill="#f0f0f0"/><path d="M6.6 8.2h2.8l-1.4 1.6z" fill="#e0e0e0"/></svg>
  <!-- exposure -->
  <svg class="ic" style="left:221.29999999999995px;top:385.6px" width="9" height="9" viewBox="0 0 9 9"><circle cx="4.5" cy="4.5" r="3.3" fill="none" stroke="#dadada" stroke-width="2.2"/><path d="M4.5 0V2M4.5 7V9M0 4.5H2M7 4.5H9" stroke="#2a2a2a" stroke-width="0.5"/></svg>
  <div class="t" style="left:234.30px;top:385.10px;font-size:8.2px;line-height:12.0px;color:#4a8fe0;transform:scaleX(0.8710);transform-origin:0 0;">+0.0</div>
  <div style="left:257.5px;top:385px;width:1px;height:10px;background:#3a3a3a"></div>
  <!-- camera -->
  <svg class="ic" style="left:264.70000000000005px;top:385.6px" width="10.5" height="8.5" viewBox="0 0 10.5 8.5"><path d="M0 1.8H2.8L3.6 0.4H6.9L7.7 1.8H10.5V8.5H0z" fill="#cfcfcf"/><circle cx="5.25" cy="5" r="2" fill="#2a2a2a"/><circle cx="5.25" cy="5" r="0.9" fill="#cfcfcf"/></svg>
  <!-- link (disabled) -->
  <svg class="ic" style="left:280px;top:385.6px" width="10" height="9" viewBox="0 0 10 9"><rect x="0.6" y="3.4" width="5.6" height="3.4" rx="1.7" transform="rotate(-35 3.4 5.1)" fill="none" stroke="#4a4a4a" stroke-width="1.1"/><rect x="3.8" y="2" width="5.6" height="3.4" rx="1.7" transform="rotate(-35 6.6 3.7)" fill="none" stroke="#4a4a4a" stroke-width="1.1"/></svg>
  <div style="left:294.5px;top:385px;width:1px;height:10px;background:#3a3a3a"></div>
  <div style="left:299.79999999999995px;top:384.3px;width:44.4px;height:11px;background:#1d1d1d;border-radius:1.5px"></div>
  <div class="t" style="left:304.70px;top:385.10px;font-size:8.2px;line-height:12.0px;color:#c8c8c8;transform:scaleX(0.8798);transform-origin:0 0;">0:00:03:22</div>

</div>

<!-- ===== TIMELINE PANEL ===== -->

<div id="tl" style="left:0;top:0;width:850px;height:523px;overflow:hidden">
  <div style="left:0;top:398px;width:850px;height:125px;background:#282828"></div><div style="left:0;top:401px;width:850px;height:18px;background:#2a2a2a"></div><div style="left:0;top:419px;width:850px;height:0.9px;background:#1f1f1f"></div>
  <div style="left:0;top:396.9px;width:850px;height:2.4px;background:#131313"></div>
  <div style="left:0;top:399.2px;width:850px;height:2.4px;background:#27395a"></div><div style="left:0;top:399.8px;width:850px;height:1.2px;background:#3e5c88"></div><div style="left:0;top:401.6px;width:850px;height:0.9px;background:#1f2122"></div>
  <!-- tabs -->
  <div class="t" style="left:13.20px;top:403.70px;font-size:8.6px;line-height:12.0px;color:#b4b4b4;transform:scaleX(0.8224);transform-origin:0 0;">Render Queue</div>
  <div style="left:96.4px;top:405.4px;width:7px;height:6.6px;background:#c9b98f"></div><div class="t" style="left:110.70px;top:403.70px;font-size:8.6px;line-height:12.0px;color:#b4b4b4;transform:scaleX(0.8191);transform-origin:0 0;">MAIN COMP</div>
  <div style="left:188px;top:405.4px;width:7px;height:6.6px;background:#c9b98f"></div><div class="t" style="left:202.50px;top:403.70px;font-size:8.6px;line-height:12.0px;color:#b4b4b4;transform:scaleX(0.7641);transform-origin:0 0;">FRAME</div>
  <div style="left:262.5px;top:405.4px;width:7px;height:6.6px;background:#c9b98f"></div><div class="t" style="left:276.80px;top:403.70px;font-size:8.6px;line-height:12.0px;color:#b4b4b4;transform:scaleX(0.7871);transform-origin:0 0;">BASE SHADOW</div>
  <div style="left:363.4px;top:405.4px;width:7px;height:6.6px;background:#c9b98f"></div><div class="t" style="left:377.80px;top:403.70px;font-size:8.6px;line-height:12.0px;color:#b4b4b4;transform:scaleX(0.7584);transform-origin:0 0;">CONCRETE</div>
  <svg class="ic" style="left:440.3px;top:407.3px" width="4" height="4" viewBox="0 0 4 4"><path d="M0.3 0.3L3.7 3.7M3.7 0.3L0.3 3.7" stroke="#9a9a9a" stroke-width="0.8"/></svg>
  <div style="left:450.6px;top:405.4px;width:7px;height:6.6px;background:#c9b98f"></div><div class="t" style="left:465.00px;top:403.70px;font-size:8.6px;line-height:12.0px;color:#e6e6e6;transform:scaleX(0.8201);transform-origin:0 0;">MAN WALKING</div>
  <svg class="ic" style="left:522.3px;top:406.3px" width="5.4" height="6" viewBox="0 0 5.4 6"><path d="M0 0.6H5.4M0 2.2H5.4M0 3.8H5.4M0 5.4H5.4" stroke="#8a8a8a" stroke-width="0.9"/></svg>
  <div style="left:440.2px;top:415.8px;width:88px;height:2px;background:#cbcbcb"></div>
  <!-- time code -->
  <div class="t" style="left:3.60px;top:420.80px;font-size:10.0px;line-height:12.0px;color:#559af0;font-weight:bold;transform:scaleX(1.0097);transform-origin:0 0;">0:00:00:00</div>
  <div class="t" style="left:2.50px;top:431.10px;font-size:7.4px;line-height:12.0px;color:#3a72bd;transform:scaleX(0.8878);transform-origin:0 0;">00000 (25.00 fps)</div>
  <!-- search -->
  <div style="left:63.4px;top:424.3px;width:329.6px;height:11.4px;background:#171717;border-radius:1px"></div>
  <svg class="ic" style="left:65.8px;top:426px" width="12" height="9" viewBox="0 0 12 9"><circle cx="5" cy="3.2" r="2.3" fill="none" stroke="#c9c9c9" stroke-width="1.1"/><path d="M3.4 5L1 7.6" stroke="#c9c9c9" stroke-width="1.3"/><path d="M8.6 5.2h3l-1.5 1.6z" fill="#c9c9c9"/></svg>
  <!-- toolbar icons -->
  <svg class="ic" style="left:404.5px;top:425.6px" width="11.5" height="9" viewBox="0 0 11.5 9"><rect x="0" y="0.6" width="5" height="2.4" fill="#b8b8b8"/><path d="M5 1.8H8.5M5 1.8L8.6 4.7M6.8 3.3V7.6H9" stroke="#b8b8b8" stroke-width="0.9" fill="none"/><rect x="8.4" y="0.8" width="2.4" height="2" fill="#b8b8b8"/><rect x="8.6" y="3.8" width="2.4" height="2" fill="#b8b8b8"/><rect x="8.8" y="6.8" width="2.4" height="2" fill="#b8b8b8"/></svg>
  <svg class="ic" style="left:426.8px;top:425px" width="11.2" height="10" viewBox="0 0 11.2 10"><path d="M2.2 4.2L5.6 0.2L9 4.2z" fill="#b4b4b4"/><rect x="0" y="4.2" width="11.2" height="1.4" fill="#b4b4b4"/><rect x="1" y="6.2" width="9.2" height="3.6" fill="#a8a8a8"/><path d="M3.4 6.2V9.8M5.6 6.2V9.8M7.8 6.2V9.8" stroke="#2a2a2a" stroke-width="0.7"/><path d="M5.6 1V4" stroke="#2a2a2a" stroke-width="0.6"/></svg>
  <svg class="ic" style="left:444.7px;top:425px" width="10.5" height="10" viewBox="0 0 10.5 10"><rect x="0.5" y="2.6" width="7" height="7" fill="#2a2a2a" stroke="#b4b4b4" stroke-width="1"/><rect x="2.6" y="0.2" width="7.8" height="7.6" fill="#b4b4b4"/><rect x="4.6" y="2.4" width="3.8" height="1.6" fill="#4a4a4a"/></svg>
  <svg class="ic" style="left:462px;top:425px" width="10.5" height="10" viewBox="0 0 10.5 10"><g transform="rotate(-40 5.25 5)"><rect x="-0.6" y="2.6" width="8.6" height="4.8" rx="2.4" fill="none" stroke="#b4b4b4" stroke-width="1.1"/><rect x="2.6" y="2.6" width="8.6" height="4.8" rx="2.4" fill="#8a8a8a" stroke="#b4b4b4" stroke-width="1.1"/></g></svg>
  <svg class="ic" style="left:484.6px;top:424.8px" width="11" height="10.4" viewBox="0 0 11 10.4"><rect x="0.6" y="1.6" width="9.8" height="8.2" rx="1.2" fill="none" stroke="#b4b4b4" stroke-width="1.1"/><path d="M2.8 0V1.6M8.6 0V1.6" stroke="#b4b4b4" stroke-width="1.1"/><path d="M1.2 2.4L9.8 9" stroke="#b4b4b4" stroke-width="1" fill="none"/></svg>
  <!-- column header row -->
  <div style="left:0;top:441.8px;width:506px;height:1.7px;background:#181818"></div>
  <div style="left:0;top:443.4px;width:506px;height:11.8px;background:#2c2c2c"></div>
  <div style="left:0;top:455.2px;width:506px;height:0.9px;background:#1e1e1e"></div>
  <svg class="ic" style="left:-0.5px;top:446.3px" width="7.4" height="6" viewBox="0 0 7.4 6"><path d="M0 3C1.6 0.6 5.8 0.6 7.4 3C5.8 5.4 1.6 5.4 0 3z" fill="#c4c4c4"/><circle cx="3.7" cy="3" r="1.3" fill="#282828"/></svg>
  <svg class="ic" style="left:8.6px;top:445.2px" width="8" height="8.4" viewBox="0 0 8 8.4"><path d="M0 2.8H1.6L3.8 0.4V8L1.6 5.6H0z" fill="#bdbdbd"/><path d="M4.6 0.6C8.6 1.6 8.6 6.8 4.6 7.8z" fill="#bdbdbd"/></svg>
  
  <div style="left:20px;top:446.7px;width:5.4px;height:5.4px;border-radius:3px;background:#c0c0c0"></div>
  <svg class="ic" style="left:29.4px;top:444.6px" width="6.6" height="9" viewBox="0 0 6.6 9"><path d="M1.5 4V2.4C1.5 0.2 5.1 0.2 5.1 2.4V4" fill="none" stroke="#c0c0c0" stroke-width="1.1"/><rect x="0" y="3.8" width="6.6" height="5" rx="0.6" fill="#c0c0c0"/><rect x="2.8" y="5.4" width="1" height="1.8" fill="#282828"/></svg>
  <svg class="ic" style="left:49.4px;top:444.6px" width="9" height="9" viewBox="0 0 9 9"><path d="M0.4 0.6H4L8.6 5L5 8.6L0.4 4.2z" fill="#bdbdbd"/><circle cx="2.2" cy="2.4" r="0.8" fill="#282828"/></svg>
  <div style="left:62px;top:444.5px;width:1px;height:9.5px;background:#1a1a1a"></div>
  <div style="left:84px;top:444.5px;width:1px;height:9.5px;background:#1a1a1a"></div>
  <div class="t" style="left:65.60px;top:444.20px;font-size:7.6px;line-height:12.0px;color:#9c9c9c;transform:scaleX(0.8044);transform-origin:0 0;">#</div>
  <div class="t" style="left:87.80px;top:444.20px;font-size:7.8px;line-height:12.0px;color:#9c9c9c;transform:scaleX(0.7570);transform-origin:0 0;">Source Name</div>
  <svg class="ic" style="left:218px;top:445.4px" width="8.5" height="8" viewBox="0 0 8.5 8"><path d="M1.6 4.6C1.4 1.8 2.6 0.3 4.25 0.3C5.9 0.3 7.1 1.8 6.9 4.6z" fill="#c4c4c4"/><rect x="0" y="4.4" width="8.5" height="1.3" fill="#c4c4c4"/><path d="M1.4 6V8M3.3 6V7.6M5.2 6V7.6M7.1 6V8" stroke="#c4c4c4" stroke-width="1"/></svg>
  <svg class="ic" style="left:228.8px;top:446px" width="6.4" height="6.8" viewBox="0 0 6.4 6.8"><path d="M3.2 0L6.4 3.4L3.2 6.8L0 3.4z" fill="none" stroke="#c0c0c0" stroke-width="1.1"/><circle cx="3.2" cy="3.4" r="0.8" fill="#c0c0c0"/></svg>
  <svg class="ic" style="left:238px;top:445px" width="7.4" height="8.6" viewBox="0 0 7.4 8.6"><path d="M0.4 0.4L7 8.2" stroke="#b8b8b8" stroke-width="1.1"/></svg>
  <div class="t" style="left:247.6px;top:443px;font-size:9px;line-height:12px;font-style:italic;color:#c0c0c0;font-family:'Liberation Sans',sans-serif;transform:scaleX(0.9);transform-origin:0 0">fx</div>
  <svg class="ic" style="left:257.7px;top:445.4px" width="8" height="8" viewBox="0 0 8 8"><rect x="0" y="0" width="8" height="8" rx="0.8" fill="#c0c0c0"/><rect x="1.6" y="1.6" width="4.8" height="2.4" fill="#5a5a5a"/><rect x="1.6" y="5" width="4.8" height="1.4" fill="#8a8a8a"/></svg>
  <svg class="ic" style="left:268px;top:445px" width="8.6" height="8.6" viewBox="0 0 8.6 8.6"><g transform="rotate(-40 4.3 4.3)"><rect x="-0.8" y="2.2" width="7.4" height="4.2" rx="2.1" fill="none" stroke="#bdbdbd" stroke-width="1"/><rect x="2" y="2.2" width="7.4" height="4.2" rx="2.1" fill="#7a7a7a" stroke="#bdbdbd" stroke-width="1"/></g></svg>
  <svg class="ic" style="left:278.4px;top:445.4px" width="7.8" height="7.8" viewBox="0 0 7.8 7.8"><circle cx="3.9" cy="3.9" r="3.4" fill="#2a2a2a" stroke="#c4c4c4" stroke-width="1"/><path d="M1.5 6.3A3.4 3.4 0 0 1 6.3 1.5z" fill="#c4c4c4"/></svg>
  <svg class="ic" style="left:288.8px;top:445.6px" width="7.4" height="7.4" viewBox="0 0 7.4 7.4"><circle cx="3.7" cy="3.7" r="3.2" fill="none" stroke="#bdbdbd" stroke-width="1"/><path d="M3.7 3.7V7M3.7 3.7L0.9 2.2M3.7 3.7L6.5 2.2" stroke="#bdbdbd" stroke-width="0.8"/></svg>
  <div style="left:303.5px;top:444.5px;width:1px;height:9.5px;background:#1a1a1a"></div>
  <div class="t" style="left:310.20px;top:444.20px;font-size:7.8px;line-height:12.0px;color:#9c9c9c;transform:scaleX(0.8046);transform-origin:0 0;">Mode</div>
  <div class="t" style="left:344.80px;top:444.20px;font-size:7.8px;line-height:12.0px;color:#9c9c9c;transform:scaleX(0.6926);transform-origin:0 0;">T</div>
  <div class="t" style="left:355.90px;top:444.20px;font-size:7.8px;line-height:12.0px;color:#9c9c9c;transform:scaleX(0.7655);transform-origin:0 0;">Track Matte</div>
  <div style="left:417px;top:444.5px;width:1px;height:9.5px;background:#1a1a1a"></div>
  <div class="t" style="left:421.00px;top:444.20px;font-size:7.8px;line-height:12.0px;color:#9c9c9c;transform:scaleX(0.7987);transform-origin:0 0;">Parent &amp; Link</div>
  <div style="left:495.2px;top:444.5px;width:1px;height:9.5px;background:#1a1a1a"></div>
  <!-- layer row -->
  <div style="left:0;top:456.1px;width:506px;height:10px;background:#353535"></div><div style="left:0;top:466.1px;width:506px;height:12px;background:#2a2a2a"></div><div style="left:0;top:478.1px;width:506px;height:0.8px;background:#222"></div>
  <svg class="ic" style="left:-0.5px;top:457.6px" width="7.4" height="6" viewBox="0 0 7.4 6"><path d="M0 3C1.6 0.6 5.8 0.6 7.4 3C5.8 5.4 1.6 5.4 0 3z" fill="#dcdcdc"/><circle cx="3.7" cy="3" r="1.3" fill="#2a2a2a"/></svg>
  
  <div style="left:18.2px;top:456.4px;width:8.8px;height:9.2px;background:#2a2a2a"></div>
  <div style="left:28.8px;top:456.4px;width:8.8px;height:9.2px;background:#2a2a2a"></div>
  <svg class="ic" style="left:44.4px;top:459.2px" width="6" height="4" viewBox="0 0 6 4"><path d="M0.5 0.5L3 3.2L5.5 0.5" fill="none" stroke="#a8a8a8" stroke-width="1.1"/></svg>
  <div style="left:52.4px;top:457px;width:8.2px;height:7.8px;background:#b5d6cc"></div>
  <div class="t" style="left:66.70px;top:455.20px;font-size:8.6px;line-height:12.0px;color:#c8c8c8;transform:scaleX(0.6899);transform-origin:0 0;">1</div>
  <svg class="ic" style="left:87px;top:456.4px" width="7.4" height="9" viewBox="0 0 7.4 9"><path d="M0.2 0.2H5L7.2 2.4V8.8H0.2z" fill="#ececec"/><rect x="1.5" y="3.2" width="4.4" height="3.8" rx="0.8" fill="#2a5fa8"/><rect x="2.8" y="4.4" width="1.8" height="1.4" fill="#ececec"/></svg>
  <div class="t" style="left:98.50px;top:455.20px;font-size:8.6px;line-height:12.0px;color:#d6d6d6;transform:scaleX(0.9055);transform-origin:0 0;">silhoue…8-05-01-11-58-utc.mov</div>
  <svg class="ic" style="left:218.3px;top:456.9px" width="8.5" height="8" viewBox="0 0 8.5 8"><path d="M1.6 4.6C1.4 1.8 2.6 0.3 4.25 0.3C5.9 0.3 7.1 1.8 6.9 4.6z" fill="#c8c8c8"/><rect x="0" y="4.4" width="8.5" height="1.3" fill="#c8c8c8"/><path d="M1.4 6V8M3.3 6V7.6M5.2 6V7.6M7.1 6V8" stroke="#c8c8c8" stroke-width="1"/></svg>
  <svg class="ic" style="left:238px;top:456.8px" width="8" height="8" viewBox="0 0 8 8"><path d="M0.6 7.6L7.4 0.4" stroke="#e8e8e8" stroke-width="1.2"/></svg>
  <div style="left:258.4px;top:456.4px;width:8.4px;height:9.2px;background:#2b2b2b"></div>
  <div style="left:268.2px;top:456.4px;width:8.4px;height:9.2px;background:#2b2b2b"></div>
  <div style="left:278.4px;top:456.4px;width:8.4px;height:9.2px;background:#2b2b2b"></div>
  <div style="left:288.4px;top:456.4px;width:8.4px;height:9.2px;background:#2b2b2b"></div>
  <div style="left:309px;top:456.4px;width:29.2px;height:9.2px;background:#1b1b1b;border-radius:1px"></div>
  <div class="t" style="left:312.70px;top:455.20px;font-size:8.8px;line-height:12.0px;color:#e4e4e4;transform:scaleX(0.8493);transform-origin:0 0;">Norn</div>
  <svg class="ic" style="left:330.6px;top:459.4px" width="6" height="4" viewBox="0 0 6 4"><path d="M0.5 0.5L3 3.2L5.5 0.5" fill="none" stroke="#d0d0d0" stroke-width="1.1"/></svg>
  <div style="left:341.8px;top:456.4px;width:8.6px;height:9.2px;background:#2b2b2b"></div>
  <svg class="ic" style="left:353.8px;top:456.4px" width="9.4" height="9" viewBox="0 0 9.4 9"><path d="M3.94 4.26 L3.84 4.40 L3.76 4.57 L3.73 4.77 L3.75 4.99 L3.82 5.21 L3.95 5.42 L4.14 5.60 L4.38 5.75 L4.66 5.84 L4.96 5.86 L5.28 5.81 L5.60 5.69 L5.89 5.49 L6.13 5.21 L6.32 4.88 L6.43 4.50 L6.46 4.09 L6.39 3.67 L6.22 3.25 L5.96 2.88 L5.61 2.56 L5.18 2.32 L4.70 2.17 L4.18 2.14 L3.65 2.22 L3.14 2.42 L2.67 2.74 L2.28 3.16 L1.97 3.67 L1.79 4.25 L1.73 4.88 L1.81 5.51 L2.04 6.13 L2.40 6.70 L2.89 7.18 L3.49 7.55 L4.17 7.79 L4.90 7.88 L5.64 7.80 L6.37 7.56 L7.03 7.16 L7.61 6.61 L8.06 5.93 L8.36 5.16 L8.48 4.33 L8.42 3.48 L8.17 2.64 L7.74 1.86" fill="none" stroke="#b8b8b8" stroke-width="1" stroke-linecap="round" stroke-linejoin="round"/></svg>
  <div style="left:365.4px;top:456.4px;width:29.6px;height:9.2px;background:#1b1b1b;border-radius:1px"></div>
  <div class="t" style="left:369.00px;top:455.20px;font-size:8.8px;line-height:12.0px;color:#e4e4e4;transform:scaleX(0.7433);transform-origin:0 0;">Non</div>
  <div class="t" style="left:381px;top:454.8px;width:3.4px;overflow:hidden;font-size:8.8px;line-height:12px;color:#e4e4e4;transform:scaleX(0.85);transform-origin:0 0">e</div>
  <svg class="ic" style="left:386.6px;top:459.4px" width="6" height="4" viewBox="0 0 6 4"><path d="M0.5 0.5L3 3.2L5.5 0.5" fill="none" stroke="#d0d0d0" stroke-width="1.1"/></svg>
  <svg class="ic" style="left:420px;top:456.4px" width="9.4" height="9" viewBox="0 0 9.4 9"><path d="M3.94 4.26 L3.84 4.40 L3.76 4.57 L3.73 4.77 L3.75 4.99 L3.82 5.21 L3.95 5.42 L4.14 5.60 L4.38 5.75 L4.66 5.84 L4.96 5.86 L5.28 5.81 L5.60 5.69 L5.89 5.49 L6.13 5.21 L6.32 4.88 L6.43 4.50 L6.46 4.09 L6.39 3.67 L6.22 3.25 L5.96 2.88 L5.61 2.56 L5.18 2.32 L4.70 2.17 L4.18 2.14 L3.65 2.22 L3.14 2.42 L2.67 2.74 L2.28 3.16 L1.97 3.67 L1.79 4.25 L1.73 4.88 L1.81 5.51 L2.04 6.13 L2.40 6.70 L2.89 7.18 L3.49 7.55 L4.17 7.79 L4.90 7.88 L5.64 7.80 L6.37 7.56 L7.03 7.16 L7.61 6.61 L8.06 5.93 L8.36 5.16 L8.48 4.33 L8.42 3.48 L8.17 2.64 L7.74 1.86" fill="none" stroke="#b8b8b8" stroke-width="1" stroke-linecap="round" stroke-linejoin="round"/></svg>
  <div style="left:433.2px;top:456.4px;width:59.4px;height:9.2px;background:#1b1b1b;border-radius:1px"></div>
  <div class="t" style="left:437.40px;top:455.20px;font-size:8.8px;line-height:12.0px;color:#e4e4e4;transform:scaleX(0.8176);transform-origin:0 0;">None</div>
  <svg class="ic" style="left:484px;top:459.4px" width="6" height="4" viewBox="0 0 6 4"><path d="M0.5 0.5L3 3.2L5.5 0.5" fill="none" stroke="#d0d0d0" stroke-width="1.1"/></svg>
  <!-- position row -->
  <svg class="ic" style="left:0.8px;top:469.6px" width="3.4" height="6" viewBox="0 0 3.4 6"><path d="M3.4 0V6L0 3z" fill="#4e4e4e"/></svg>
  <svg class="ic" style="left:9px;top:469px" width="7" height="7" viewBox="0 0 7 7"><path d="M3.5 0L7 3.5L3.5 7L0 3.5z" fill="#4d94e8"/></svg>
  <svg class="ic" style="left:20.6px;top:469.4px" width="4.4" height="6.4" viewBox="0 0 4.4 6.4"><path d="M0 0V6.4L4.4 3.2z" fill="#e0e0e0"/></svg>
  <svg class="ic" style="left:76px;top:468px" width="8.4" height="9.2" viewBox="0 0 8.4 9.2"><circle cx="4.2" cy="5.2" r="3.4" fill="none" stroke="#3f86de" stroke-width="1.1"/><path d="M3 0.5H5.4M4.2 0.5V1.8M4.2 5.2L5.8 3.4" stroke="#3f86de" stroke-width="1" fill="none"/></svg>
  <svg class="ic" style="left:88px;top:468.6px" width="8" height="8" viewBox="0 0 8 8"><path d="M0.5 0V7.5H8" stroke="#a6a6a6" stroke-width="1" fill="none"/><path d="M1.6 6L3.6 3L5 4.6L7.4 2.6" stroke="#a6a6a6" stroke-width="0.9" fill="none"/></svg>
  <div class="t" style="left:101.80px;top:467.00px;font-size:8.4px;line-height:12.0px;color:#c0c0c0;transform:scaleX(0.8667);transform-origin:0 0;">Position</div>
  <div class="t" style="left:218.60px;top:467.00px;font-size:8.4px;line-height:12.0px;color:#3f82d6;transform:scaleX(0.8489);transform-origin:0 0;">3952.0,1080.0</div>
  <svg class="ic" style="left:429px;top:467.8px" width="9.4" height="9" viewBox="0 0 9.4 9"><path d="M3.94 4.26 L3.84 4.40 L3.76 4.57 L3.73 4.77 L3.75 4.99 L3.82 5.21 L3.95 5.42 L4.14 5.60 L4.38 5.75 L4.66 5.84 L4.96 5.86 L5.28 5.81 L5.60 5.69 L5.89 5.49 L6.13 5.21 L6.32 4.88 L6.43 4.50 L6.46 4.09 L6.39 3.67 L6.22 3.25 L5.96 2.88 L5.61 2.56 L5.18 2.32 L4.70 2.17 L4.18 2.14 L3.65 2.22 L3.14 2.42 L2.67 2.74 L2.28 3.16 L1.97 3.67 L1.79 4.25 L1.73 4.88 L1.81 5.51 L2.04 6.13 L2.40 6.70 L2.89 7.18 L3.49 7.55 L4.17 7.79 L4.90 7.88 L5.64 7.80 L6.37 7.56 L7.03 7.16 L7.61 6.61 L8.06 5.93 L8.36 5.16 L8.48 4.33 L8.42 3.48 L8.17 2.64 L7.74 1.86" fill="none" stroke="#8e8e8e" stroke-width="1" stroke-linecap="round" stroke-linejoin="round"/></svg>
  <!-- ===== right: time graph ===== -->
  <div style="left:505.6px;top:420.2px;width:3.8px;height:103px;background:#1c1c1c"></div>
  <div style="left:509.2px;top:420.6px;width:341px;height:22px;background:#222222"></div>
  <div style="left:509.2px;top:420.6px;width:341px;height:2.6px;background:#171717"></div>
  <div style="left:511px;top:423.2px;width:339px;height:4.8px;background:#848484"></div>
  <div style="left:506.6px;top:422.6px;width:4.6px;height:6px;background:#4a8fe6;border-radius:3px 0 0 3px"></div>
  <div style="left:509.2px;top:428.4px;width:341px;height:0.8px;background:#1a1a1a"></div>
  <div style="left:509.2px;top:441.5px;width:341px;height:1px;background:#1a1a1a"></div>
  <div class="t" style="left:510.40px;top:428.80px;font-size:7.8px;line-height:12.0px;color:#b4b4b4;transform:scaleX(0.8429);transform-origin:0 0;">00s</div>
  <div style="left:511.2px;top:438.4px;width:0.9px;height:2.6px;background:#9a9a9a"></div>
  <div class="t" style="left:568.40px;top:428.80px;font-size:7.8px;line-height:12.0px;color:#b4b4b4;transform:scaleX(0.8429);transform-origin:0 0;">01s</div>
  <div style="left:573.4px;top:438.4px;width:0.9px;height:2.6px;background:#9a9a9a"></div>
  <div class="t" style="left:630.60px;top:428.80px;font-size:7.8px;line-height:12.0px;color:#b4b4b4;transform:scaleX(0.8429);transform-origin:0 0;">02s</div>
  <div style="left:635.6px;top:438.4px;width:0.9px;height:2.6px;background:#9a9a9a"></div>
  <div class="t" style="left:692.80px;top:428.80px;font-size:7.8px;line-height:12.0px;color:#b4b4b4;transform:scaleX(0.8429);transform-origin:0 0;">03s</div>
  <div style="left:697.8px;top:438.4px;width:0.9px;height:2.6px;background:#9a9a9a"></div>
  <div class="t" style="left:755.00px;top:428.80px;font-size:7.8px;line-height:12.0px;color:#b4b4b4;transform:scaleX(0.8429);transform-origin:0 0;">04s</div>
  <div style="left:760.0px;top:438.4px;width:0.9px;height:2.6px;background:#9a9a9a"></div>
  <div class="t" style="left:817.20px;top:428.80px;font-size:7.8px;line-height:12.0px;color:#b4b4b4;transform:scaleX(0.8429);transform-origin:0 0;">05s</div>
  <div style="left:822.2px;top:438.4px;width:0.9px;height:2.6px;background:#9a9a9a"></div>
  <div style="left:511px;top:442.6px;width:339px;height:9.6px;background:#6f6f6f"></div>
  <div style="left:507px;top:443.2px;width:4.4px;height:9.2px;background:#4a8fe6;border-radius:2.4px 0 0 2.4px"></div>
  <!-- track area -->
  <div style="left:509.2px;top:452.4px;width:341px;height:70.6px;background:#3b3b3b"></div>
  <div style="left:511.6px;top:452.8px;width:339px;height:2.7px;background:#4cb545"></div>
  <div style="left:509.2px;top:455.3px;width:341px;height:1px;background:#2a2a2a"></div>
  <div style="left:511.6px;top:456.3px;width:339px;height:9.6px;background:#8da19d;border-radius:3px 0 0 0"></div>
  <div style="left:509.2px;top:466.2px;width:341px;height:11.3px;background:#353535"></div>
  <div style="left:509.2px;top:477.5px;width:341px;height:0.8px;background:#2c2c2c"></div>
  <!-- keyframes -->
  <svg class="ic" style="left:508.7px;top:469.5px" width="5.8" height="6.2" viewBox="0 0 6.4 6.8"><path d="M3.2 0L6.4 3.4L3.2 6.8L0 3.4z" fill="#d4d4d4"/></svg>
  <svg class="ic" style="left:819.7px;top:469.5px" width="5.8" height="6.2" viewBox="0 0 6.4 6.8"><path d="M3.2 0L6.4 3.4L3.2 6.8L0 3.4z" fill="#d4d4d4"/><path d="M3.2 0L6.4 3.4L3.2 6.8z" fill="#9a9a9a"/></svg>
  <!-- marker red line -->
  <div style="left:756.6px;top:455.5px;width:1.2px;height:67.5px;background:#a84442;opacity:0.8"></div>
  <div style="left:524.4px;top:456.5px;width:0.8px;height:9px;background:#a06a6a;opacity:0.3"></div>
  <div style="left:519px;top:479.5px;width:0.9px;height:3.4px;background:#b04a48;opacity:0.8"></div>
  <!-- playhead -->
  <div style="left:510.7px;top:436px;width:1.5px;height:87px;background:#5590dc;opacity:0.88"></div>
  <svg class="ic" style="left:507px;top:431.2px" width="9" height="9.6" viewBox="0 0 9 9.6"><path d="M0.4 0.6Q0.4 0 1 0H8Q8.6 0 8.6 0.6V4L4.5 9.6L0.4 4z" fill="#5a9cf0" opacity="0.9"/></svg>
</div>
</body></html>
